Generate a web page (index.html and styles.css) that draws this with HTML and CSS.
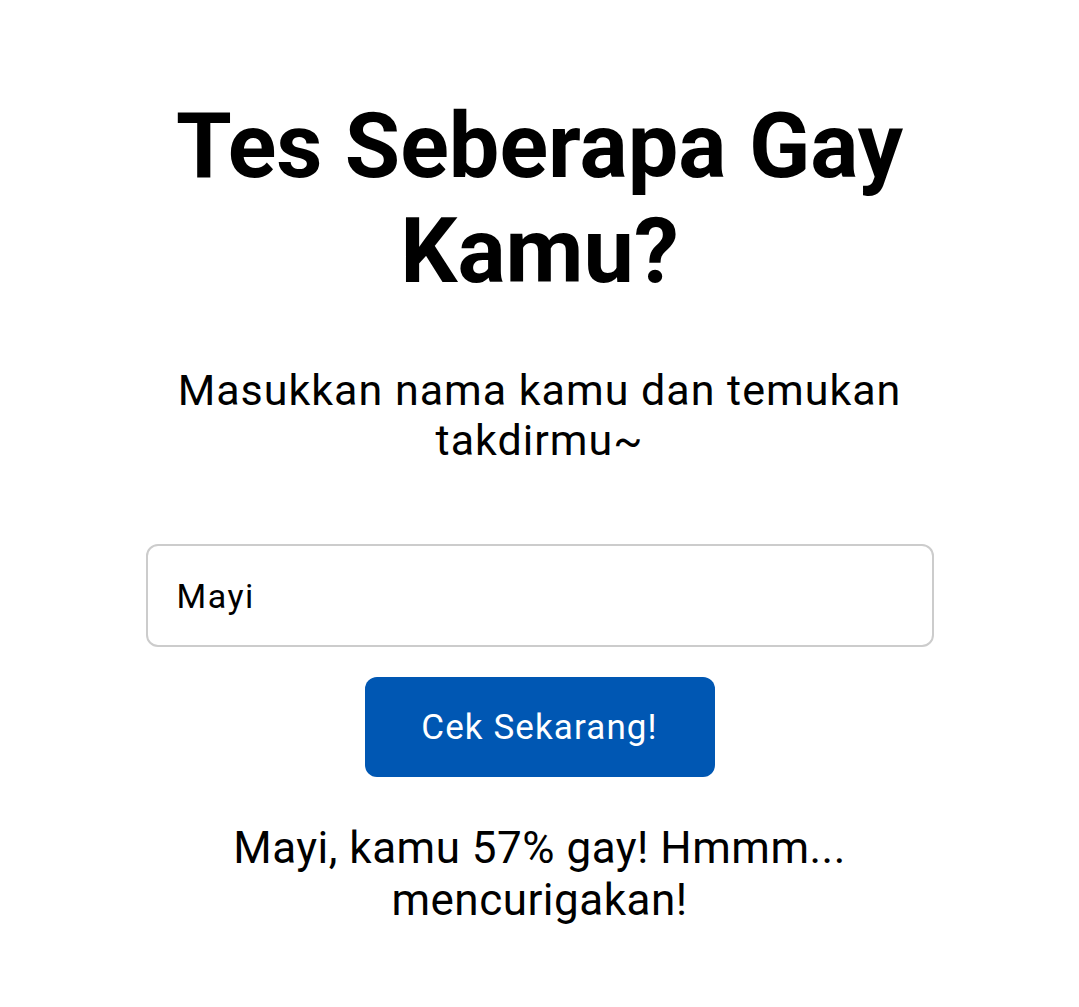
FILE: index.html
```html
<!DOCTYPE html>
<html lang="id">
<head>
<meta charset="utf-8">
<title>Tes Seberapa Gay Kamu?</title>
<link rel="stylesheet" href="styles.css">
</head>
<body>
<main class="page">
  <h1 class="title">Tes Seberapa Gay Kamu?</h1>
  <p class="subtitle">Masukkan nama kamu dan temukan takdirmu~</p>
  <input class="name-input" type="text" value="Mayi">
  <button class="check-btn" type="button">Cek Sekarang!</button>
  <p class="result">Mayi, kamu 57% gay! Hmmm... mencurigakan!</p>
</main>
</body>
</html>
```

FILE: styles.css
```css
html, body {
  margin: 0;
  padding: 0;
  background: #ffffff;
}

body {
  font-family: Roboto, "Liberation Sans", Arial, sans-serif;
  color: #000000;
}

.page {
  width: 788px;
  margin: 0 auto;
  padding-top: 94px;
  display: flex;
  flex-direction: column;
  align-items: center;
  text-align: center;
}

.title {
  margin: 0;
  font-size: 90px;
  font-weight: 700;
  line-height: normal;
  width: 760px;
}

.subtitle {
  margin: 61px 0 0;
  font-size: 43px;
  letter-spacing: 1px;
  font-weight: 400;
  line-height: normal;
  width: 760px;
}

.name-input {
  margin-top: 79px;
  box-sizing: border-box;
  width: 788px;
  height: 103px;
  padding: 0 29px;
  border: 2px solid #cccccc;
  border-radius: 12px;
  font-family: Roboto, "Liberation Sans", Arial, sans-serif;
  font-size: 34px;
  letter-spacing: 1.5px;
  color: #000000;
  background: #ffffff;
  outline: none;
}

.check-btn {
  margin-top: 30px;
  box-sizing: border-box;
  width: 350px;
  height: 100px;
  border: none;
  border-radius: 12px;
  background: #0057b3;
  color: #ffffff;
  font-family: Roboto, "Liberation Sans", Arial, sans-serif;
  font-size: 35px;
  letter-spacing: 1.1px;
  cursor: pointer;
}

.result {
  margin: 45px 0 0;
  font-size: 44px;
  letter-spacing: 0.5px;
  line-height: normal;
  width: 700px;
}
```
